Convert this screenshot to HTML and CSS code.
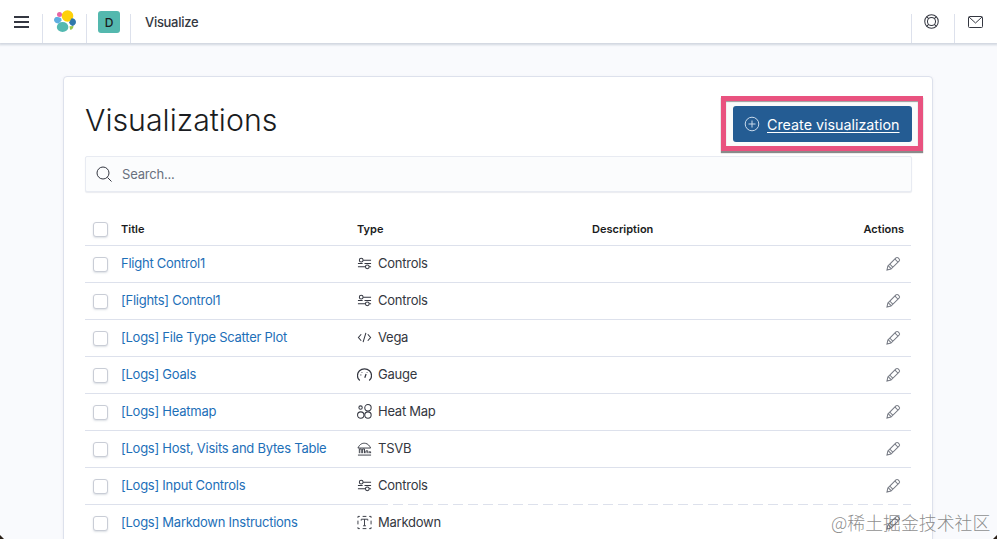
FILE: index.html
```html
<!DOCTYPE html>
<html lang="en">
<head>
<meta charset="utf-8">
<title>Visualize</title>
<link rel="stylesheet" href="styles.css">
</head>
<body>
<svg class="sprites" width="0" height="0" aria-hidden="true">
  <symbol id="i-pencil" viewBox="0 0 16 16"><g fill="none" stroke="#777b85" stroke-width="1.100"><path d="M1 15l1-4.300 8.600-8.600c.7-.7 1.700-.7 2.400 0l.9.9c.7.7.7 1.700 0 2.400l-8.600 8.600z"/><path d="M2.500 10.500l3 3M4.200 8.800l3 3M9.600 3.400l3 3"/></g></symbol>
  <symbol id="i-controls" viewBox="0 0 16 16"><g fill="none" stroke="#343741" stroke-width="1.100"><circle cx="4.500" cy="4.500" r="2"/><circle cx="11" cy="11.500" r="2"/><path d="M6.500 4.500H15M1 11.500h8M13 11.500h2"/><path d="M8 8h7M1 8h5"/></g></symbol>
  <symbol id="i-vega" viewBox="0 0 16 16"><path d="M4.500 4.500L1.500 8l3 3.500M11.500 4.500l3 3.500-3 3.500M9.500 3l-3 10" fill="none" stroke="#343741" stroke-width="1.100"/></symbol>
  <symbol id="i-gauge" viewBox="0 0 16 16"><path d="M3 14.500C1.200 13.200 .5 11.200 .5 9.200.5 5 3.800 2 8 2s7.500 3 7.500 7.200c0 2-.7 4-2.500 5.300M9.700 7.500L8.300 11.500" fill="none" stroke="#343741" stroke-width="1.300"/><path d="M3.500 8.500h1.200M5 5.600l.8.800M11 5.600l-.8.800" stroke="#343741" stroke-width="1"/></symbol>
  <symbol id="i-heat" viewBox="0 0 16 16"><g fill="none" stroke="#343741" stroke-width="1.100"><circle cx="3.800" cy="3.800" r="1.800"/><circle cx="11.700" cy="4" r="3.400"/><circle cx="4" cy="11.800" r="3.400"/><circle cx="11.700" cy="11.800" r="3.400"/></g></symbol>
  <symbol id="i-tsvb" viewBox="0 0 16 16"><g fill="none" stroke="#343741" stroke-width="1"><path d="M1 15h14M2.500 13V8.500h2V13M6 13V8.500h2V13M9.500 13v-2.500h2V13M13 13v-1.500h1.500V13"/><path d="M1 7.500C3 3 6 2 9 2.500c2.500.4 4.500 2.500 5.500 5H1z"/></g></symbol>
  <symbol id="i-md" viewBox="0 0 16 16"><g fill="none" stroke="#343741" stroke-width="1"><path d="M1 3V1.500h2M6 1.500h4M13 1.500h2V3M15 6v4M15 13v1.500h-2M10 14.500H6M3 14.500H1V13M1 10V6"/><path d="M4.500 6V4.500h7V6M8 4.500v7M6.500 11.500h3"/></g></symbol>
</svg>

<header class="topbar">
  <div class="cell menu-cell">
    <svg width="15" height="12" viewBox="0 0 15 12"><path d="M0 1h15M0 6h15M0 11h15" stroke="#343741" stroke-width="2"/></svg>
  </div>
  <div class="cell logo-cell">
    <svg width="24" height="24" viewBox="0 0 24 24">
      <circle cx="14.500" cy="7" r="5.800" fill="#fed10a"/>
      <ellipse cx="9.600" cy="18" rx="5.800" ry="5.100" fill="#53b9b1"/>
      <path d="M2.500 8.200c1.700-.6 3.800-.1 5.600 1.100l.6 2.300-3 3C3 14.300 1 13 1 11c0-1.100.6-2.200 1.500-2.800z" fill="#5daee0"/>
      <path d="M16 13.500l2.600-4.300c2-.2 4.400 1.500 4.400 3.800 0 1.500-1.600 3.600-3.600 4l-2-1.300z" fill="#2f78ab"/>
      <circle cx="6.500" cy="5.500" r="2.500" fill="#e766a5"/>
      <path d="M16.500 17.300l4-.3c.1 1.900-1.500 4-3.400 3.700z" fill="#99c64a"/>
    </svg>
  </div>
  <div class="cell avatar-cell"><span class="avatar">D</span></div>
  <div class="page-name">Visualize</div>
  <div class="cell right-cell help-cell">
    <svg width="15" height="15" viewBox="0 0 16 16"><g fill="none" stroke="#343741" stroke-width="1.100"><circle cx="8" cy="8" r="7.200"/><circle cx="8" cy="8" r="4.300"/><path d="M3 3l2 2M13 3l-2 2M3 13l2-2M13 13l-2-2"/></g></svg>
  </div>
  <div class="cell right-cell mail-cell">
    <svg width="15" height="12" viewBox="0 0 15 12"><g fill="none" stroke="#343741" stroke-width="1"><rect x=".5" y=".5" width="14" height="11" rx="1"/><path d="M1 1l6.500 6L14 1"/></g></svg>
  </div>
</header>

<main class="page">
  <section class="panel">
    <div class="panel-head">
      <h1 class="title">Visualizations</h1>
      <div class="annot">
        <a class="create-btn" href="#">
          <svg width="16" height="16" viewBox="0 0 16 16"><g fill="none" stroke="#c9daeb" stroke-width="1"><circle cx="8" cy="8" r="6.800"/><path d="M8 4.500v7M4.500 8h7"/></g></svg>
          <span class="create-label">Create visualization</span>
        </a>
      </div>
    </div>

    <div class="search">
      <svg width="16" height="16" viewBox="0 0 16 16"><g fill="none" stroke="#343741" stroke-width="1"><circle cx="7" cy="7" r="6"/><path d="M11.500 11.500l4 4"/></g></svg>
      <span>Search...</span>
    </div>

    <div class="table">
      <div class="row head">
        <span class="cb"></span><span>Title</span><span>Type</span><span>Description</span><span class="actions">Actions</span>
      </div>
      <div class="row">
        <span class="cb"></span><a href="#">Flight Control1</a>
        <span class="type"><svg class="ti"><use href="#i-controls"/></svg>Controls</span><span></span>
        <span class="actions"><svg class="pen"><use href="#i-pencil"/></svg></span>
      </div>
      <div class="row">
        <span class="cb"></span><a href="#">[Flights] Control1</a>
        <span class="type"><svg class="ti"><use href="#i-controls"/></svg>Controls</span><span></span>
        <span class="actions"><svg class="pen"><use href="#i-pencil"/></svg></span>
      </div>
      <div class="row">
        <span class="cb"></span><a href="#">[Logs] File Type Scatter Plot</a>
        <span class="type"><svg class="ti"><use href="#i-vega"/></svg>Vega</span><span></span>
        <span class="actions"><svg class="pen"><use href="#i-pencil"/></svg></span>
      </div>
      <div class="row">
        <span class="cb"></span><a href="#">[Logs] Goals</a>
        <span class="type"><svg class="ti"><use href="#i-gauge"/></svg>Gauge</span><span></span>
        <span class="actions"><svg class="pen"><use href="#i-pencil"/></svg></span>
      </div>
      <div class="row">
        <span class="cb"></span><a href="#">[Logs] Heatmap</a>
        <span class="type"><svg class="ti"><use href="#i-heat"/></svg>Heat Map</span><span></span>
        <span class="actions"><svg class="pen"><use href="#i-pencil"/></svg></span>
      </div>
      <div class="row">
        <span class="cb"></span><a href="#">[Logs] Host, Visits and Bytes Table</a>
        <span class="type"><svg class="ti"><use href="#i-tsvb"/></svg>TSVB</span><span></span>
        <span class="actions"><svg class="pen"><use href="#i-pencil"/></svg></span>
      </div>
      <div class="row">
        <span class="cb"></span><a href="#">[Logs] Input Controls</a>
        <span class="type"><svg class="ti"><use href="#i-controls"/></svg>Controls</span><span></span>
        <span class="actions"><svg class="pen"><use href="#i-pencil"/></svg></span>
      </div>
      <div class="row">
        <span class="cb"></span><a href="#">[Logs] Markdown Instructions</a>
        <span class="type"><svg class="ti"><use href="#i-md"/></svg>Markdown</span><span></span>
        <span class="actions"><svg class="pen"><use href="#i-pencil"/></svg></span>
      </div>
    </div>
  </section>
</main>

<div class="dash-overlay"></div>
<div class="watermark">@稀土掘金技术社区</div>
<div class="corner corner-l"></div>
<div class="corner corner-r"></div>
</body>
</html>
```

FILE: styles.css
```css
* { box-sizing: border-box; }
html, body { margin: 0; height: 539px; overflow: hidden; }
body {
  background: #f9fafd;
  font-family: Inter, "Liberation Sans", sans-serif;
  color: #343741;
  font-size: 14px;
  position: relative;
}
.sprites { position: absolute; }

.topbar {
  height: 43px;
  background: #fff;
  display: flex;
  align-items: stretch;
  box-shadow: 0 1px 2px 1px rgba(152, 162, 179, .4);
  position: relative;
}
.cell {
  display: flex;
  align-items: center;
  justify-content: center;
  width: 44px;
  position: relative;
}
.menu-cell { width: 43px; }
.menu-cell::after, .logo-cell::after, .avatar-cell::after, .right-cell::before {
  content: "";
  position: absolute;
  top: 14px;
  bottom: 0;
  width: 1px;
  background: #dde1ec;
}
.menu-cell::after, .logo-cell::after, .avatar-cell::after { right: 0; }
.right-cell::before { left: 0; }
.logo-cell { align-items: flex-start; padding-top: 9px; padding-right: 1px; }
.avatar-cell { align-items: flex-start; padding-top: 11px; }
.avatar {
  width: 22px;
  height: 22px;
  border-radius: 3px;
  background: #54b8ae;
  color: #1a1c21;
  font-size: 12px;
  font-weight: 500;
  display: flex;
  align-items: center;
  justify-content: center;
}
.page-name {
  flex: 1;
  padding: 14px 0 0 14px;
  font-size: 13px;
  font-weight: 500;
  line-height: 16px;
  letter-spacing: -.3px;
}
.right-cell { align-items: flex-start; }
.right-cell svg { display: block; }
.help-cell { width: 43px; padding: 14px 2px 0 0; }
.mail-cell { width: 43px; padding: 16px 0 0 0; }

.page { padding: 33px 63px 0; }
.panel {
  width: 870px;
  background: #fff;
  border: 1px solid #dde1ec;
  border-radius: 4px;
  padding: 19px 21px 0 21px;
  box-shadow: 0 1px 3px rgba(152, 162, 179, .15);
  height: 600px;
}
.panel-head {
  display: flex;
  justify-content: space-between;
  align-items: center;
  margin-bottom: 5px;
}
.title {
  margin: 0 0 7px;
  font-size: 30.300px;
  font-weight: 300;
  line-height: 48px;
  color: #1a1c21;
}
.annot {
  margin-right: -12px;
  width: 202px;
  height: 55px;
  border: 5px solid #e9527f;
  background: #fafbfb;
  padding: 5px 6px 0 7px;
  box-shadow: 0 2px 1px rgba(60, 60, 60, .6), inset 0 1px 1px rgba(60, 60, 60, .5);
}
.create-btn {
  height: 36px;
  width: 179px;
  border-radius: 3px;
  background: #245c93;
  color: #fff;
  display: flex;
  align-items: center;
  gap: 7px;
  padding-left: 11px;
  font-size: 14.300px;
  font-weight: 400;
  text-decoration: none;
}
.create-btn svg { margin-top: -1px; flex: none; }
.create-label { text-decoration: underline; text-underline-offset: 2px; }

.search {
  height: 36px;
  width: 827px;
  background: #fbfcfd;
  border: 1px solid #e8ebf2;
  border-radius: 2px;
  box-shadow: 0 1px 1px rgba(152, 162, 179, .2);
  display: flex;
  align-items: center;
  gap: 10px;
  padding-left: 10px;
  color: #69707d;
  font-size: 13px;
  letter-spacing: -.2px;
}
.search svg { flex: none; }

.table { margin-top: 20px; width: 826px; }
.row {
  display: grid;
  grid-template-columns: 36px 236px 235px 1fr 120px;
  align-items: center;
  height: 37px;
  border-bottom: 1px solid #dde1ec;
  font-size: 13px;
  letter-spacing: -.25px;
  padding-bottom: 2px;
}
.row.head {
  height: 34px;
  font-size: 11px;
  font-weight: 600;
  letter-spacing: 0;
  color: #1a1c21;
  padding: 1px 0 0;
}
.row a { color: #1d6fb8; text-decoration: none; }
.cb {
  width: 15px;
  height: 15px;
  margin: 2px 0 0 8px;
  background: #fff;
  border: 1px solid #c9cdd6;
  border-radius: 3px;
  box-shadow: 0 1px 2px rgba(152, 162, 179, .35);
}
.head .cb { margin-top: 0; }
.type { display: flex; align-items: center; gap: 6px; color: #343741; }
.ti { width: 15px; height: 15px; flex: none; }
.actions { text-align: right; padding-right: 7px; }
.pen { width: 15px; height: 15px; display: inline-block; vertical-align: middle; margin-right: 3px; }

.dash-overlay {
  position: absolute;
  left: 388px;
  top: 504px;
  width: 523px;
  height: 1px;
  background: repeating-linear-gradient(90deg, #fff 0 5px, transparent 5px 15px);
}
.watermark {
  position: absolute;
  left: 831px;
  top: 511px;
  font-family: "Noto Sans CJK SC", sans-serif;
  font-size: 17.900px;
  line-height: 22px;
  font-weight: 300;
  color: rgba(90, 90, 90, .7);
  white-space: nowrap;
}
.corner { position: absolute; bottom: 0; width: 4px; height: 4px; background: #2a2018; }
.corner-l { left: 0; clip-path: polygon(0 0, 100% 100%, 0 100%); }
.corner-r { right: 0; clip-path: polygon(100% 0, 100% 100%, 0 100%); }
```
